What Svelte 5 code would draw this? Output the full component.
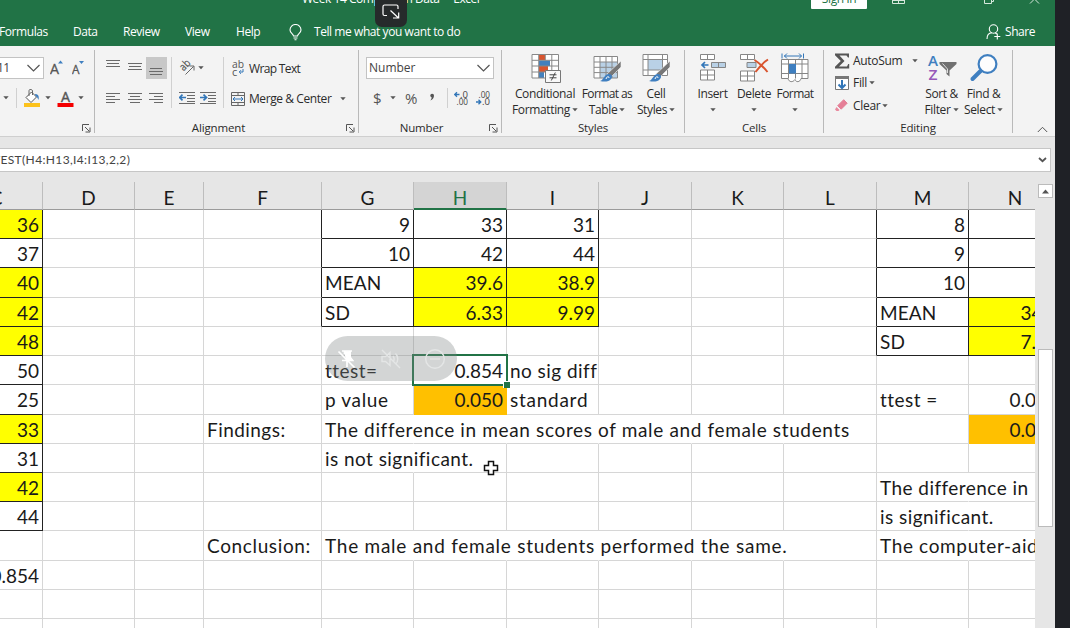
<script>
  const columns = [
    ['C', 43], ['D', 92], ['E', 69], ['F', 118], ['G', 92], ['H', 93],
    ['I', 92], ['J', 93], ['K', 92], ['L', 93], ['M', 92], ['N', 93]
  ];
  const names = columns.map((c) => c[0]);
  const rows = Array.from({ length: 15 }, (_, i) => i + 1);

  const cells = {};
  const put = (key, text, opts = '') => (cells[key] = { text, opts });

  ['36', '37', '40', '42', '48', '50', '25', '33', '31', '42', '44'].forEach((v, i) =>
    put('C' + (i + 1), v, 'num boxed' + ([0, 2, 3, 4, 7, 9].includes(i) ? ' yellow' : ''))
  );
  put('C13', '0.854', 'num');
  put('G1', '9', 'num boxed'); put('H1', '33', 'num boxed'); put('I1', '31', 'num boxed');
  put('G2', '10', 'num boxed'); put('H2', '42', 'num boxed'); put('I2', '44', 'num boxed');
  put('G3', 'MEAN', 'boxed caps'); put('H3', '39.6', 'num boxed yellow'); put('I3', '38.9', 'num boxed yellow');
  put('G4', 'SD', 'boxed caps'); put('H4', '6.33', 'num boxed yellow'); put('I4', '9.99', 'num boxed yellow');
  put('G6', 'ttest='); put('H6', '0.854', 'num selected'); put('I6', 'no sig diff');
  put('G7', 'p value', 'sp'); put('H7', '0.050', 'num orange'); put('I7', 'standard', 'sp2');
  put('F8', 'Findings:');
  put('G8', 'The difference in mean scores of male and female students', 'open sp');
  put('G9', 'is not significant.', 'open');
  put('F12', 'Conclusion:', 'sp');
  put('G12', 'The male and female students performed the same.', 'open sp2');
  for (const k of ['H8', 'I8', 'J8', 'K8', 'H12', 'I12', 'J12', 'K12']) put(k, '', 'open');
  for (let r = 1; r <= 4; r++) put('F' + r, '', 'edge');
  for (let r = 1; r <= 5; r++) put('L' + r, '', 'edge');
  put('M1', '8', 'num boxed'); put('N1', '', 'boxed');
  put('M2', '9', 'num boxed'); put('N2', '', 'boxed');
  put('M3', '10', 'num boxed'); put('N3', '', 'boxed');
  put('M4', 'MEAN', 'boxed caps'); put('N4', '34.1', 'num boxed yellow');
  put('M5', 'SD', 'boxed caps'); put('N5', '7.33', 'num boxed yellow');
  put('M7', 'ttest ='); put('N7', '0.000', 'num'); put('N8', '0.050', 'num orange');
  put('M10', 'The difference in', 'open');
  put('M11', 'is significant.', 'open');
  put('M12', 'The computer-aided', 'open sp');
</script>

{#snippet caret()}
  <svg class="caret" width="6" height="4" viewBox="0 0 6 4"><path d="M.3.3h5.4L3 3.3z" fill="#555" /></svg>
{/snippet}
{#snippet launcher()}
  <svg class="launcher" width="9" height="9" viewBox="0 0 9 9" fill="none" stroke="#555"><path d="M.5 7V.5H7M3 3l4 4M8 3.5V8H3.5" /></svg>
{/snippet}
{#snippet lines(list)}
  <svg width="14" height="14" viewBox="0 0 14 14" stroke="#6a6a6a">
    {#each list as l}<path d={`M${l[0]} ${l[2]}H${l[1]}`} />{/each}
  </svg>
{/snippet}
{#snippet brush()}
  <path d="M28 8v6L18 24l-4-3z" fill="#777" stroke="#f3f3f3" stroke-width=".6" />
  <path d="M7 28c4-1 4-7 9-7 3 0 4 3 2 5-2 3-7 3-11 2z" fill="#3f7fc0" />
  <path d="M13 26c1-3 3-3 3-1" stroke="#fff" fill="none" />
{/snippet}

<div class="screen">
  <div class="excel">
    <header>
      <div class="titlebar">
        <span class="doc">Week 14 Comparison Data&nbsp; -&nbsp; Excel</span>
        <span class="signin"><span>Sign in</span></span>
        <svg class="w1" width="13" height="8" viewBox="0 0 13 8" fill="none" stroke="#d6e8dc"><path d="M.5 0v3.500h12V0M6.500 0v3M0 .5h13" /></svg>
        <svg class="w2" width="11" height="8" viewBox="0 0 11 8" fill="none" stroke="#d6e8dc"><path d="M.5 0v3.500h7V0M7.500 1.500h2V0" /></svg>
        <svg class="w3" width="11" height="8" viewBox="0 0 11 8" fill="none" stroke="#d6e8dc"><path d="M1 3.500 5.500-1 10 3.500" /></svg>
      </div>
      <nav>
        <span class="t1">Formulas</span><span class="t2">Data</span><span class="t3">Review</span>
        <span class="t4">View</span><span class="t5">Help</span>
        <svg class="bulb" width="13" height="17" viewBox="0 0 13 17" fill="none" stroke="#fff" stroke-width="1.100"><path d="M4.500 12c0-2-3.500-3-3.500-6a5.500 5.500 0 0 1 11 0c0 3-3.500 4-3.500 6zM4.500 14h4M5.500 15.800h2" /></svg>
        <span class="tell">Tell me what you want to do</span>
        <svg class="person" width="15" height="16" viewBox="0 0 15 16" fill="none" stroke="#fff" stroke-width="1.100"><circle cx="7.500" cy="5" r="4.200" /><path d="M1 15c0-4 2-6 5-6.200M9 8.800l2 1.200M11.300 9.500v6M8.300 12.500h6" /></svg>
        <span class="share">Share</span>
      </nav>
      <div class="switch">
        <svg width="18" height="16" viewBox="0 0 18 16" fill="none" stroke="#fff" stroke-width="1.200"><path d="M5 11.500H2.500a1.500 1.500 0 0 1-1.500-1.500V2.500A1.500 1.500 0 0 1 2.500 1h12A1.500 1.500 0 0 1 16 2.500V5M8.500 6.500l8 7.500M16.700 8.500V14H11" /></svg>
      </div>
    </header>

    <div class="ribbon">
      <section class="font">
        <div class="r1">
          <div class="combo size"><span>11</span><svg width="13" height="8" viewBox="0 0 13 8" fill="none" stroke="#555" stroke-width="1.200"><path d="M.5 1l6 6 6-6" /></svg></div>
          <svg width="14" height="18" viewBox="0 0 14 18"><text x="0" y="14.500" font-size="14" textLength="9" lengthAdjust="spacingAndGlyphs" fill="#555" stroke="#555" stroke-width=".3">A</text><path d="M8 4.500 10.500 1.500 13 4.500z" fill="#3f7fc0" /></svg>
          <svg width="14" height="18" viewBox="0 0 14 18"><text x="0" y="14.500" font-size="12" textLength="7.500" lengthAdjust="spacingAndGlyphs" fill="#555" stroke="#555" stroke-width=".3">A</text><path d="M7 2h5L9.500 5z" fill="#3f7fc0" /></svg>
        </div>
        <div class="r2">
          {@render caret()}<i class="sep"></i>
          <svg class="bucket" width="18" height="18" viewBox="0 0 18 18"><path d="M3 8.500 8.500 3l5 5L8 13.500z" fill="#fff" stroke="#555" /><path d="M6 7V1.500C6 0 9.500 0 9.500 2v4" fill="none" stroke="#666" /><path d="M12 5c3 0 4.500 2 3.500 6-1-2-1-3-3-4z" fill="#3f7fc0" /><path d="M1 14h16v4H1z" fill="#fcc21c" /></svg>
          {@render caret()}
          <svg class="ink" width="17" height="18" viewBox="0 0 17 18"><text x="4" y="12.500" font-size="14" textLength="9" lengthAdjust="spacingAndGlyphs" fill="#555" stroke="#555" stroke-width=".4">A</text><path d="M.5 14h16v4H.5z" fill="#f40000" /></svg>
          {@render caret()}
        </div>
        <footer>{@render launcher()}</footer>
      </section>

      <section class="align">
        <div class="pair">
          <div class="buttons">
            <div class="brow top">
              {@render lines([[0, 14, 1.5], [1, 13, 4.5], [0, 14, 7.5]])}
              {@render lines([[0, 14, 4.5], [1, 13, 7.5], [0, 14, 10.5]])}
              <span class="on">{@render lines([[1, 13, 7.5], [0, 14, 10.5], [1, 13, 13.5]])}</span>
            </div>
            <div class="brow">
              {@render lines([[0, 14, 1.5], [0, 9, 4.5], [0, 14, 7.500], [0, 9, 10.500]])}
              {@render lines([[0, 14, 1.5], [2, 12, 4.5], [0, 14, 7.500], [2, 12, 10.500]])}
              {@render lines([[0, 14, 1.5], [5, 14, 4.5], [0, 14, 7.500], [5, 14, 10.500]])}
            </div>
          </div>
          <div class="orient">
            <div class="orow">
              <svg width="17" height="16" viewBox="0 0 17 16"><text transform="translate(4.500 11.500) rotate(-45)" font-size="11" textLength="11" lengthAdjust="spacingAndGlyphs" fill="#555" stroke="#555" stroke-width=".2">ab</text><path d="M6.500 14.500l8-8M10.500 6H15v4.500" fill="none" stroke="#666" /></svg>
              {@render caret()}
            </div>
            <div class="irow">
              {#each [0, 1] as k}
                <svg width="16" height="14" viewBox="0 0 16 14" fill="none" stroke="#6a6a6a"><path d="M0 1.500h16M8 4.500h8M8 7.500h8M8 10.500h8M0 12.500h16" /><path d={k ? 'M0 6.500h6M3.500 3.700 6.500 6.500 3.500 9.300' : 'M7 6.500H1M3.500 3.700.7 6.500l2.800 2.800'} stroke="#3276b8" stroke-width="1.700" /></svg>
              {/each}
            </div>
          </div>
          <div class="wrap">
            <div class="wrow">
              <svg width="13" height="17" viewBox="0 0 13 17"><text x="0" y="8" font-size="11.500" textLength="12" lengthAdjust="spacingAndGlyphs" fill="#555">ab</text><text x="0" y="15.500" font-size="11" fill="#555">c</text><path d="M11 9v3H7.500M9 10.200 7.200 12 9 13.800" stroke="#3276b8" fill="none" /></svg>
              <span class="l-wrap">Wrap Text</span>
            </div>
            <div class="mrow">
              <svg width="16" height="16" viewBox="0 0 16 16" fill="none" stroke="#666"><path d="M1.500 1.500h13v13h-13zM1 4.500h14M1 11.500h14M8 1v3M8 12v3" /><path d="M3 8h10M5 6 3 8l2 2M11 6l2 2-2 2" stroke="#3276b8" /></svg>
              <span class="l-merge">Merge &amp; Center</span>{@render caret()}
            </div>
          </div>
        </div>
        <footer><span class="g-align">Alignment</span>{@render launcher()}</footer>
      </section>

      <section class="number">
        <div class="combo fmt"><span>Number</span><svg width="13" height="8" viewBox="0 0 13 8" fill="none" stroke="#555" stroke-width="1.200"><path d="M.5 1l6 6 6-6" /></svg></div>
        <div class="nrow">
          <b class="dollar">$</b>{@render caret()}<b class="pct">%</b>
          <svg class="comma" width="6" height="10" viewBox="0 0 6 10"><path d="M3 .7a1.900 1.900 0 0 1 2 2C5 5 3.500 6.600 1.300 7.500 2.500 6 2.800 5 2.500 4.300A1.850 1.850 0 0 1 3 .7" fill="#555" /></svg>
          <i class="sep"></i>
          <svg class="d1" width="15" height="15" viewBox="0 0 15 15"><path d="M5.500 3.500H1M3 1.200.7 3.500 3 5.800" fill="none" stroke="#3276b8" stroke-width="1.300" /><text x="6" y="6.800" font-size="9" textLength="8" lengthAdjust="spacingAndGlyphs" fill="#444">.0</text><text x="2.500" y="14.300" font-size="9" textLength="11.500" lengthAdjust="spacingAndGlyphs" fill="#444">.00</text></svg>
          <svg width="15" height="15" viewBox="0 0 15 15"><text x="2.500" y="6.800" font-size="9" textLength="11.500" lengthAdjust="spacingAndGlyphs" fill="#444">.00</text><path d="M0 11h4.500M2.500 8.700 4.800 11l-2.300 2.300" fill="none" stroke="#3276b8" stroke-width="1.300" /><text x="6" y="14.300" font-size="9" textLength="8" lengthAdjust="spacingAndGlyphs" fill="#444">.0</text></svg>
        </div>
        <footer><span class="g-num">Number</span>{@render launcher()}</footer>
      </section>

      <section class="styles">
        <div class="bigs">
          <div class="big cf">
            <svg width="30" height="30" viewBox="0 0 30 30"><path d="M1 1.500h26.500v23.500H1z" fill="#fff" /><path d="M8 2h6v5H8zM8 13h9v6H8z" fill="#d9552f" /><path d="M8 7.500h11v5.500H8zM8 19h5v6H8z" fill="#4380bd" /><path d="M1 1.500h26.500V25H1zM1 7.300h26.500M1 13h26.500M1 19h26.500M7.700 1.500V25M14.300 1.500v5.800M20.800 1.500V25" fill="none" stroke="#888" /><path d="M14.500 17.500h15v12h-15z" fill="#f8f8f8" stroke="#777" /><path d="M18.500 21.800h7M18.500 24.800h7M24.300 19.500l-4 8" stroke="#444" fill="none" /></svg>
            <span class="l-cond">Conditional</span><span class="l-formatting">Formatting{@render caret()}</span>
          </div>
          <div class="big ft">
            <svg width="30" height="30" viewBox="0 0 30 30"><path d="M1 3.500h23.500V25H1z" fill="#fff" /><path d="M7 9h17.500v16H7z" fill="#b9d1e6" /><path d="M1 3.500h23.500V25H1zM1 9h23.500M1 14.300h23.500M1 19.600h23.500M7 3.500V25M13 3.500V25M19 3.500V25" fill="none" stroke="#888" />{@render brush()}</svg>
            <span class="l-fmtas">Format as</span><span class="l-table">Table{@render caret()}</span>
          </div>
          <div class="big cs">
            <svg width="30" height="30" viewBox="0 0 30 30"><path d="M1 1.500h24.500v21H1z" fill="#fff" /><path d="M6 6.500h14.500v10.500H6z" fill="#b9d1e6" /><path d="M1 1.500h24.500v21H1zM1 6.500h24.500M1 17h24.500M6 1.500v21M20.500 1.500v21" fill="none" stroke="#888" />{@render brush()}</svg>
            <span class="l-cell">Cell</span><span class="l-styles">Styles{@render caret()}</span>
          </div>
        </div>
        <footer><span class="g-sty">Styles</span></footer>
      </section>

      <section class="cellsg">
        <div class="bigs">
          <div class="big in">
            <svg width="30" height="30" viewBox="0 0 30 30" fill="#fff" stroke="#858585"><path d="M2.500 1.500h14v5h-14zM9.500 1.500v5M2.500 17h14v10h-14zM2.500 22h14M9.500 17v10" /><path d="M13.500 9.500h14v5h-14zM20.500 9.500v5" fill="#b9d1e6" /><path d="M10.500 12H4M7 9 4 12l3 3" fill="none" stroke="#3276b8" stroke-width="1.700" /></svg>
            <span class="l-insert">Insert</span><span>{@render caret()}</span>
          </div>
          <div class="big de">
            <svg width="30" height="30" viewBox="0 0 30 30" fill="#fff" stroke="#858585"><path d="M1.500 1.500h14v5h-14zM8.500 1.500v5M1.500 18h14v10h-14zM1.500 23h14M8.500 18v10" /><path d="M8 9.500h9v5H8z" fill="#b9d1e6" /><path d="M15.500 7c5 3 9 7 13 12M29 6.500c-5 3-9 8-12.500 12.500" fill="none" stroke="#d9552f" stroke-width="2" /></svg>
            <span class="l-delete">Delete</span><span>{@render caret()}</span>
          </div>
          <div class="big fo">
            <svg width="30" height="30" viewBox="0 0 30 30" fill="#fff" stroke="#858585"><path d="M1.500 6.500h26.500v19H21c-1 4-5 4-6 1-2 3-6 3-7-1H1.500z" /><path d="M1.500 11h26.500M1.500 20.500h26.500M8.500 6.500v19M15.500 6.500v19M22 6.500v19" fill="none" /><path d="M9 11h7v9.500H9z" fill="#3f7fc0" stroke="none" /><path d="M2 .5v5M23.500.5v5M4 3h17.500M7 .5 4.500 3 7 5.500M19 .5 21.500 3 19 5.500" fill="none" stroke="#3276b8" /></svg>
            <span class="l-format">Format</span><span>{@render caret()}</span>
          </div>
        </div>
        <footer><span class="g-cells">Cells</span></footer>
      </section>

      <section class="editing">
        <div class="epair">
          <div class="stack">
            <div><svg width="16" height="16" viewBox="0 0 16 16"><path d="M1 .5h14v4h-1L12.500 2.500H5.500L10.500 8l-5.500 5.500H13l1.200-2.500h1V15.500H1v-1.800L6.800 8 1 2.200z" fill="#555" /></svg><span class="l-auto">AutoSum</span>{@render caret()}</div>
            <div class="fill"><svg width="16" height="16" viewBox="0 0 16 16"><path d="M1.500 1.500h13v13h-13z" fill="#fff" stroke="#777" /><path d="M1 1h14v3H1z" fill="#777" /><path d="M8 5v8M4.500 9.500 8 13l3.500-3.500" fill="none" stroke="#3276b8" stroke-width="2" /></svg><span class="l-fill">Fill</span>{@render caret()}</div>
            <div class="clear"><svg width="16" height="16" viewBox="0 0 16 16"><path d="M9 2.500 12.500 6 6.500 12 3 8.500z" fill="#e57f97" transform="translate(.7 -.8)" stroke="#e57f97" stroke-linejoin="round" /><path d="M2.500 9 5.500 12 4.500 13h-2L1 11.500z" fill="#e9899e" /></svg><span class="l-clear">Clear</span>{@render caret()}</div>
          </div>
          <div class="big so">
            <svg width="30" height="30" viewBox="0 0 30 30"><text x="1" y="12.500" font-size="15" font-weight="600" textLength="10" lengthAdjust="spacingAndGlyphs" fill="#3f7fc0">A</text><text x="1.500" y="26.500" font-size="15" font-weight="600" textLength="9" lengthAdjust="spacingAndGlyphs" fill="#9558b8">Z</text><path d="M12.500 9h17v2l-7 6.500v6l-3-2.500v-3.500l-7-6.500z" fill="#707070" /><path d="M15.500 10.500 20.500 16v4" stroke="#ddd" fill="none" /></svg>
            <span class="l-sort">Sort &amp;</span><span class="l-filter">Filter{@render caret()}</span>
          </div>
          <div class="big fi">
            <svg width="30" height="30" viewBox="0 0 30 30" fill="none"><circle cx="18.500" cy="11" r="8.900" fill="#fdfdfd" stroke="#3f7fc0" stroke-width="2.200" /><path d="M11.500 18 3.500 26" stroke="#3f7fc0" stroke-width="4" stroke-linecap="round" /></svg>
            <span class="l-find">Find &amp;</span><span class="l-select">Select{@render caret()}</span>
          </div>
        </div>
        <footer><span class="g-ed">Editing</span></footer>
      </section>
      <svg class="collapse" width="11" height="7" viewBox="0 0 11 7" fill="none" stroke="#555"><path d="M.8 6 5.500 1.300 10.200 6" /></svg>
    </div>

    <div class="formula"><div class="fbox"><span>TEST(H4:H13,I4:I13,2,2)</span><svg width="9" height="6" viewBox="0 0 9 6" fill="none" stroke="#555" stroke-width="1.800"><path d="M1 1l3.500 3.200L8 1" /></svg></div></div>

    <main>
      <div class="sheet">
        <div class="grid heads">
          {#each columns as [name]}<div class="head" class:active={name === 'H'} class:c={name === 'C'}>{name}</div>{/each}
        </div>
        <div class="grid body">
          {#each rows as r}
            {#each names as n}
              {@const cell = cells[n + r]}
              <div class="cell {cell?.opts ?? ''}">{#if cell?.text}<span>{cell.text}</span>{/if}</div>
            {/each}
          {/each}
        </div>
        <div class="pill">
          <svg width="24" height="24" viewBox="0 0 24 24" fill="none" stroke="#fff" stroke-width="1.700"><path d="M7 4h10M9.500 4v3M15 4v6l2.500 3.500H13M7 13.500h6M12 14v6M3.500 4.500l16 16" /><path d="M10 5h5v6l2 2h-5z" fill="#fff" /></svg>
          <svg width="24" height="24" viewBox="0 0 24 24" fill="none" stroke="#e4e6e6" stroke-width="1.400"><path d="M3 9.500h3.500L11 5.500v13l-4.500-4H3zM14 9c1.500 2 1.500 4 0 6M16.500 6.500c3 3 3 8 0 11M3 3l18 18" /></svg>
          <svg width="24" height="24" viewBox="0 0 24 24" fill="none" stroke="#e4e6e6" stroke-width="1.400"><circle cx="12" cy="12" r="9.300" /><path d="M7 12h10" /></svg>
        </div>
        <svg class="cursor" width="16" height="16" viewBox="0 0 16 16"><path d="M5.500 1.500h5v4h4v5h-4v4h-5v-4h-4v-5h4z" fill="#fff" stroke="#111" stroke-width="1.500" /></svg>
      </div>
      <div class="scroll">
        <div class="up"><svg width="7" height="5" viewBox="0 0 7 5"><path d="M0 4.500 3.500.5 7 4.500z" fill="#555" /></svg></div>
        <div class="thumb"></div>
      </div>
    </main>
  </div>
</div>

<style>
  :global(body) { margin: 0; overflow: hidden; }
  .screen { width: 1070px; height: 628px; background: #1f2126; overflow: hidden; font: 12px/16px "Open Sans", "Noto Sans", sans-serif; color: #2b2b2b; }
  .excel { width: 1055px; height: 628px; background: #e6e6e6; display: flex; flex-direction: column; }
  .screen *, .screen { box-sizing: border-box; }
  svg { display: block; flex: none; }
  span { white-space: nowrap; }
  header { height: 46px; background: #217346; color: #fff; position: relative; overflow: hidden; flex: none; }
  .titlebar { height: 10px; display: flex; align-items: flex-start; overflow: hidden; }
  .doc { width: 811px; flex: none; padding-left: 302px; margin-top: -9px; letter-spacing: -.48px; }
  .signin { width: 56px; height: 9px; background: #fff; color: #217346; display: flex; justify-content: center; border-radius: 0 0 1px 1px; }
  .signin span { margin-top: -9px; letter-spacing: -.35px; }
  .w1 { margin-left: 25px; } .w2 { margin-left: 79px; } .w3 { margin-left: 34px; }
  nav { height: 36px; display: flex; align-items: center; padding-top: 7px; letter-spacing: -.43px; }
  nav span { flex: none; }
  .t1 { width: 73px; } .t2 { width: 50px; } .t3 { width: 62px; } .t4 { width: 51px; } .t5 { width: 53px; }
  .t1 { text-indent: -1px; }
  .tell { margin-left: 12px; width: 672px; } .share { margin-left: 4px; } .bulb { margin-top: 1px; }
  .switch { position: absolute; left: 375px; top: 0; width: 32px; height: 27px; background: #262a2b; border-radius: 0 0 7px 7px; display: flex; justify-content: center; padding-top: 4px; }

  .ribbon { height: 91px; flex: none; background: #f3f3f3; border-bottom: 1px solid #cfcfcf; display: flex; padding-top: 4px; }
  section { height: 83px; border-right: 1px solid #b9b9b9; display: flex; flex-direction: column; flex: none; }
  .font { width: 95px; } .align { width: 264px; } .number { width: 143px; } .styles { width: 183px; } .cellsg { width: 139px; } .editing { width: 189px; }
  footer { height: 16px; flex: none; margin-top: auto; margin-bottom: -3px; display: flex; align-items: center; justify-content: center; position: relative; padding-bottom: 1px; letter-spacing: -.15px; font-size: 11.5px; }
  .launcher { position: absolute; right: 3px; top: 4px; }
  .number .launcher { right: 3px; }
  .g-align { margin-right: 16px; } .g-num { margin-right: 17px; }
  .combo { height: 22px; background: #fff; border: 1px solid #c3c3c3; display: flex; align-items: center; justify-content: space-between; padding: 0 3px; color: #444; }
  .fmt span { margin-left: -1px; }
  .size { width: 44px; border-left: 0; padding-left: 0; letter-spacing: -.6px; }
  .size span { margin-left: -3px; }
  .r1 { display: flex; align-items: center; margin-top: 7px; gap: 6px; height: 22px; }
  .r1 > svg + svg { margin-left: 2px; }
  .r2 { display: flex; align-items: center; height: 20px; margin-top: 9px; padding-left: 3px; }
  .sep { width: 1px; background: #d0d0d0; height: 20px; flex: none; }
  .r2 .sep { margin-left: 7px; }
  .bucket { margin: 0 4px 0 6px; } .ink { margin: 0 4px 0 6px; }

  .pair { display: flex; margin-top: 7px; height: 51px; }
  .buttons { width: 77px; border-right: 1px solid #d0d0d0; padding-left: 11px; }
  .brow { display: flex; gap: 7.500px; }
  .brow.top { height: 22px; } .brow.top > svg { margin-top: 2px; }
  .on { background: #c8c8c8; width: 21px; height: 22px; margin-left: -3px; padding: 4px 3px; }
  .brow:not(.top) { margin-top: 13px; }
  .orient { width: 52px; border-right: 1px solid #d0d0d0; padding-left: 7px; }
  .orow { display: flex; align-items: center; height: 22px; gap: 2px; }
  .irow { display: flex; gap: 5px; margin-top: 12px; }
  .wrap { padding-left: 7px; }
  .wrow, .mrow { display: flex; align-items: center; height: 22px; }
  .wrow { padding-left: 1px; padding-top: 1px; } .wrow span { margin-left: 4px; } .mrow { margin: 9px 0 0 -1px; }
  .mrow span { margin: 0 9px 0 3px; }
  .l-wrap { letter-spacing: -.65px; } .l-merge { letter-spacing: -.42px; }

  .fmt { width: 128px; margin: 7px 0 0 7px; }
  .nrow { height: 22px; display: flex; align-items: center; margin: 8px 0 0 14px; color: #555; }
  .nrow b { font-weight: 400; font-size: 15px; } .dollar { width: 17px; } .pct { margin-left: 9px; width: 13px; } .comma { margin-left: 11px; }
  .nrow .sep { margin-left: 12px; } .nrow .d1 { margin: 0 7px 0 6px; }

  .bigs, .epair { display: flex; height: 66px; flex: none; }
  .big { display: flex; flex-direction: column; align-items: center; flex: none; padding-top: 3px; }
  .big > svg { margin-bottom: 3px; }
  .big > span { flex: none; height: 15.500px; line-height: 15px; display: flex; align-items: center; gap: 2px; letter-spacing: -.36px; }
  .big .caret { margin-top: 1px; }
  .big .l-format, .big .l-fmtas { letter-spacing: -.6px; }
  .cf { width: 72px; margin-left: 7px; } .ft { width: 52px; } .cs { width: 44px; margin-left: 1px; }
  .cf > svg, .ft > svg, .cs > svg { position: relative; left: 1px; }
  .in { width: 42px; margin-left: 6.500px; } .de { width: 41px; } .fo { width: 41px; }
  .stack { width: 96px; padding: 0 0 0 10px; }
  .stack div { height: 22.300px; display: flex; align-items: center; letter-spacing: -.3px; }
  .stack div > svg:first-child { margin-right: 3px; }
  .stack .caret { margin-left: 2px; } .stack div:first-child .caret { margin-left: 10px; }
  .so { width: 43px; } .fi { width: 41px; }
  .collapse { margin: 76px 0 0 24px; }

  .formula { height: 45px; padding-top: 11px; flex: none; }
  .fbox { width: 1051px; height: 24px; background: #fff; border: 1px solid #c6c6c6; border-left: 0; display: flex; align-items: center; justify-content: space-between; padding-right: 3px; color: #444; font: 12px/22px Lato, sans-serif; }
  .fbox span { margin-left: -7px; letter-spacing: .36px; }

  main { display: flex; flex: 1; min-height: 0; }
  .sheet { width: 1035px; height: 446px; overflow: hidden; position: relative; font: 19px/28px Lato, Carlito, sans-serif; color: #1a1a1a; flex: none; }
  .grid { display: grid; grid-template-columns: 43px 92px 69px 118px 92px 93px 92px 93px 92px 93px 92px 93px; width: 1062px; }
  .heads { height: 28px; }
  .head { height: 28px; border-right: 1px solid #bdbdbd; border-bottom: 1px solid #9b9b9b; text-align: center; line-height: 31px; overflow: hidden; }
  .head.c { text-indent: -50px; }
  .head.active { background: #d4d4d4; color: #217346; border-bottom: 2px solid #217346; }
  .body { grid-template-rows: 29px 29px 30px 29px 29px 29px 30px 29px 29px 29px 29px 30px 29px 29px 29px; background: #fff; }
  .cell { border-right: 1px solid #d6d6d6; border-bottom: 1px solid #d6d6d6; padding: 1px 3px 0; min-width: 0; display: flex; position: relative; letter-spacing: .45px; }
  .cell span { position: relative; z-index: 2; }
  .cell.num { justify-content: flex-end; letter-spacing: 0; }
  .open { border-right-color: transparent; }
  .cell.caps { letter-spacing: .1px; }
  .cell.sp { letter-spacing: .64px; } .cell.sp2 { letter-spacing: .74px; }
  .edge { border-right-color: #222; }
  .boxed { border-color: #222; }
  .yellow { background: #ff0; } .orange { background: #ffc000; border-color: #ffc000; }
  .selected::before { content: ""; position: absolute; inset: -2px -2px -2px -2px; border: 2px solid #217346; z-index: 1; }
  .selected::after { content: ""; position: absolute; right: -4px; bottom: -4px; width: 6px; height: 6px; background: #217346; border: 1px solid #fff; border-width: 1px 0 0 1px; z-index: 3; }
  .pill { position: absolute; left: 325px; top: 154px; width: 132px; height: 45px; border-radius: 23px; background: rgba(125, 133, 133, .34); display: flex; align-items: center; padding-left: 10px; gap: 20px; z-index: 4; }
  .cursor { position: absolute; left: 483px; top: 278px; z-index: 5; }
  .scroll { width: 18px; margin-left: 3px; padding-top: 2px; display: flex; flex-direction: column; }
  .up { width: 15px; height: 14px; background: #fff; border: 1px solid #bbb; display: flex; align-items: center; justify-content: center; }
  .thumb { width: 15px; height: 178px; margin-top: 151px; background: #fff; border: 1px solid #bbb; }
</style>
